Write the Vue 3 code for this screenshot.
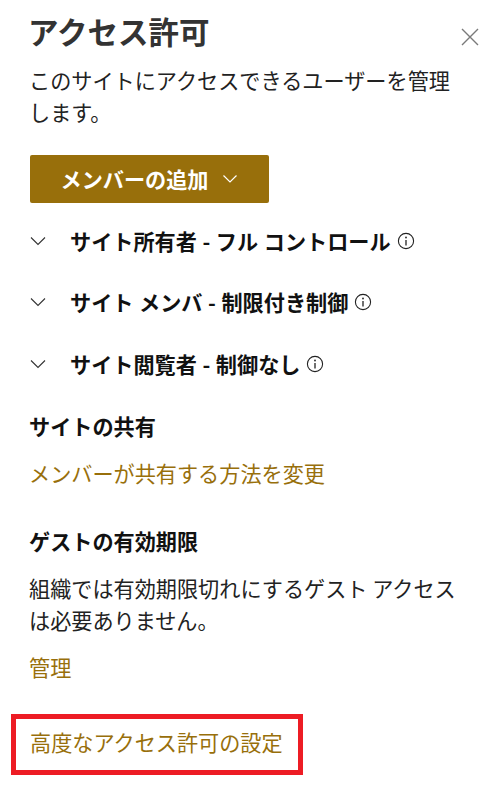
<template>
  <div class="panel">
    <header class="header">
      <h1>アクセス許可</h1>
      <button class="close" aria-label="閉じる">
        <svg width="18" height="18" viewBox="0 0 18 18"><path d="M1 1l16 16M17 1L1 17" stroke="#7a7a7a" stroke-width="1.4" fill="none" /></svg>
      </button>
    </header>
    <p class="intro">このサイトにアクセスできるユーザーを管理します。</p>

    <button class="add-btn">
      <span>メンバーの追加</span>
      <svg width="16" height="10" viewBox="0 0 16 10"><path d="M1.5 1.5L8 8l6.5-6.5" stroke="#fff" stroke-width="1.2" fill="none" /></svg>
    </button>

    <div class="groups">
      <div v-for="group in groups" :key="group" class="group">
        <svg class="chevron" width="16" height="10" viewBox="0 0 16 10"><path d="M1 1.5L8 8.5l7-7" stroke="#333" stroke-width="1.1" fill="none" /></svg>
        <span class="group-name">{{ group }}</span>
        <svg class="info" width="18" height="18" viewBox="0 0 18 18">
          <circle cx="9" cy="9" r="7.6" stroke="#222" stroke-width="1.1" fill="none" />
          <path d="M9 8v5.5" stroke="#222" stroke-width="1.3" />
          <circle cx="9" cy="5.5" r="0.9" fill="#222" />
        </svg>
      </div>
    </div>

    <section class="share">
      <h2>サイトの共有</h2>
      <a class="link">メンバーが共有する方法を変更</a>
    </section>

    <section class="guest">
      <h2>ゲストの有効期限</h2>
      <p>組織では有効期限切れにするゲスト アクセスは必要ありません。</p>
      <a class="link">管理</a>
    </section>

    <div class="advanced">
      <a class="link">高度なアクセス許可の設定</a>
    </div>
  </div>
</template>

<script setup>
const groups = [
  'サイト所有者 - フル コントロール',
  'サイト メンバ - 制限付き制御',
  'サイト閲覧者 - 制御なし'
]
</script>

<style>
html, body {
  background: #fff;
}
</style>

<style scoped>
.panel {
  width: 492px;
  height: 787px;
  overflow: hidden;
  box-sizing: border-box;
  padding: 9px 13px 0 29px;
  font-family: "Noto Sans CJK JP", "Liberation Sans", sans-serif;
  font-size: 21.15px;
  line-height: 32px;
  color: #222;
}

.header {
  display: flex;
  justify-content: space-between;
  align-items: center;
}

.header h1 {
  margin: 0 0 0 -1px;
  font-size: 30.5px;
  line-height: 44px;
  font-weight: 700;
  color: #333;
}

.close {
  padding: 0;
  margin-top: 11px;
  border: none;
  background: none;
  line-height: 0;
  width: 18px;
}

.intro {
  margin: 11px 0 0;
  width: 430px;
}

.add-btn {
  display: flex;
  align-items: center;
  justify-content: center;
  gap: 14px;
  width: 239px;
  height: 48px;
  margin: 27px 0 0 1px;
  padding: 0;
  border: none;
  border-radius: 2px;
  background: #986f0b;
  color: #fff;
  font: inherit;
  font-weight: 700;
}

.groups {
  margin-top: 7px;
}

.group {
  display: flex;
  align-items: center;
  height: 61.5px;
  font-weight: 700;
  color: #111;
}

.chevron {
  margin: 0 24px 0 1px;
}

.group-name {
  white-space: nowrap;
  margin-right: 6px;
  word-spacing: 0.8px;
}

h2 {
  margin: 0;
  font-size: 21.15px;
  font-weight: 700;
  color: #111;
}

.share {
  margin-top: 15.5px;
}

.share .link {
  display: block;
  margin-top: 15px;
}

.link {
  color: #986f0b;
}

.guest {
  margin-top: 36px;
}

.guest p {
  margin: 15px 0 0;
  width: 440px;
}

.guest .link {
  display: block;
  margin-top: 15px;
}

.advanced {
  box-sizing: border-box;
  width: 292px;
  height: 61px;
  margin: 31px 0 0 -18px;
  border: 5px solid #ed1c24;
  padding: 7px 0 0 14px;
}
</style>
